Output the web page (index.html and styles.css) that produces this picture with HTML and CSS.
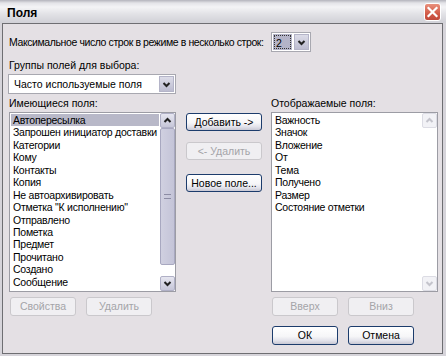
FILE: index.html
```html
<!DOCTYPE html>
<html lang="ru">
<head>
<meta charset="utf-8">
<title>Поля</title>
<link rel="stylesheet" href="styles.css">
</head>
<body>
<div class="window">
  <div class="titlebar">
    <span class="title">Поля</span>
    <span class="close"><svg width="17" height="18" viewBox="0 0 17 18"><path d="M4.5 5 L12.5 13 M12.5 5 L4.5 13" stroke="#fff" stroke-width="2.2" stroke-linecap="square"/></svg></span>
  </div>
  <div class="frame">
    <div class="row-max">
      <span class="max-label">Максимальное число строк в режиме в несколько строк:</span>
      <div class="spin">
        <span class="spin-val"><span class="focus">2</span></span>
        <span class="dropbtn"><svg width="9" height="7" viewBox="0 0 9 7"><path d="M1.5 2 L4.5 5 L7.5 2" fill="none" stroke="#222" stroke-width="2"/></svg></span>
      </div>
    </div>
    <div class="lbl lbl-groups">Группы полей для выбора:</div>
    <div class="combo">
      <span class="combo-text">Часто используемые поля</span>
      <span class="dropbtn"><svg width="9" height="7" viewBox="0 0 9 7"><path d="M1.5 2 L4.5 5 L7.5 2" fill="none" stroke="#222" stroke-width="2"/></svg></span>
    </div>
    <div class="lists">
      <div class="col">
        <div class="lbl">Имеющиеся поля:</div>
        <div class="listbox">
          <ul class="items">
            <li class="sel">Автопересылка</li>
            <li>Запрошен инициатор доставки</li>
            <li>Категории</li>
            <li>Кому</li>
            <li>Контакты</li>
            <li>Копия</li>
            <li>Не автоархивировать</li>
            <li>Отметка "К исполнению"</li>
            <li>Отправлено</li>
            <li>Пометка</li>
            <li>Предмет</li>
            <li>Прочитано</li>
            <li>Создано</li>
            <li>Сообщение</li>
          </ul>
          <div class="scroll">
            <span class="sbtn"><svg width="9" height="7" viewBox="0 0 9 7"><path d="M1.5 5 L4.5 2 L7.5 5" fill="none" stroke="#222" stroke-width="2"/></svg></span>
            <span class="thumb"><span class="grip"></span></span>
            <span class="track"></span>
            <span class="sbtn"><svg width="9" height="7" viewBox="0 0 9 7"><path d="M1.5 2 L4.5 5 L7.5 2" fill="none" stroke="#222" stroke-width="2"/></svg></span>
          </div>
        </div>
        <div class="btnrow">
          <button class="btn" disabled>Свойства</button>
          <button class="btn" disabled>Удалить</button>
        </div>
      </div>
      <div class="col mid">
        <button class="btn wide">Добавить -&gt;</button>
        <button class="btn wide second" disabled>&lt;- Удалить</button>
        <button class="btn wide third">Новое поле...</button>
      </div>
      <div class="col">
        <div class="lbl">Отображаемые поля:</div>
        <div class="listbox">
          <ul class="items">
            <li>Важность</li>
            <li>Значок</li>
            <li>Вложение</li>
            <li>От</li>
            <li>Тема</li>
            <li>Получено</li>
            <li>Размер</li>
            <li>Состояние отметки</li>
          </ul>
          <div class="scroll off">
            <span class="sbtn"><svg width="9" height="7" viewBox="0 0 9 7"><path d="M1.5 5 L4.5 2 L7.5 5" fill="none" stroke="#c4c4cc" stroke-width="2"/></svg></span>
            <span class="track"></span>
            <span class="sbtn"><svg width="9" height="7" viewBox="0 0 9 7"><path d="M1.5 2 L4.5 5 L7.5 2" fill="none" stroke="#c4c4cc" stroke-width="2"/></svg></span>
          </div>
        </div>
        <div class="btnrow">
          <button class="btn" disabled>Вверх</button>
          <button class="btn" disabled>Вниз</button>
        </div>
        <div class="btnrow okrow">
          <button class="btn">ОК</button>
          <button class="btn">Отмена</button>
        </div>
      </div>
    </div>
  </div>
</div>
</body>
</html>
```

FILE: styles.css
```css
* { box-sizing: border-box; margin: 0; padding: 0; }
body {
  margin: 0;
  font-family: "Liberation Sans", Arial, sans-serif;
  font-size: 10.5px;
  color: #000;
  background: #fff;
}
.window {
  width: 446px;
  height: 356px;
  background: #d6d4da;
  display: flex;
  flex-direction: column;
}
.titlebar {
  height: 23px;
  flex: none;
  background: linear-gradient(#b4b4bc 0, #e4e4e8 3px, #f4f4f6 7px, #e2e2e6 14px, #d2d2d8 22px);
  display: flex;
  align-items: center;
  justify-content: space-between;
  padding: 0 5px 0 7px;
}
.title {
  font-weight: bold;
  font-size: 12px;
  color: #000;
  padding-top: 2px;
}
.close {
  width: 17px;
  height: 18px;
  margin-top: 1px;
  border-radius: 3px;
  border: 1px solid #fff;
  background: linear-gradient(#e8907c, #d25a48 60%, #c04a3c);
  display: flex;
}
.close svg { display: block; margin: -1px; }
.frame {
  flex: 1;
  margin: 0 3px 2px 2px;
  border: 1px solid #6e6e72;
  background: #e4e0e4;
  padding: 8px 0 0 6px;
}
.row-max {
  display: flex;
  align-items: center;
  height: 20px;
}
.max-label { width: 262px; white-space: nowrap; letter-spacing: -0.4px; }
.spin {
  width: 40px;
  height: 20px;
  border: 1px solid #a8a8b0;
  background: #fff;
  display: flex;
  padding: 1px;
  gap: 2px;
}
.spin-val {
  width: 20px;
  background: #b4b4c8;
  display: flex;
  padding: 1px;
}
.focus {
  flex: 1;
  border: 1px dotted #333;
  line-height: 14px;
  padding-left: 1px;
}
.dropbtn {
  width: 15px;
  background: linear-gradient(#dcdce8, #bcbcd0);
  border: 1px solid #ffffff;
  outline: 1px solid #b4b4c8;
  outline-offset: -1px;
  display: flex;
  align-items: center;
  justify-content: center;
}
.lbl {
  height: 13px;
  line-height: 13px;
  white-space: nowrap;
}
.lbl-groups { margin-top: 7px; }
.combo {
  margin-top: 2px;
  width: 168px;
  height: 20px;
  margin-left: -1px;
  border: 1px solid #a8a8b0;
  background: #fff;
  display: flex;
  padding: 1px;
}
.combo-text { flex: 1; line-height: 16px; padding-left: 4px; }
.lists {
  margin-top: 3px;
  display: grid;
  grid-template-columns: 167px 76px 166px;
  column-gap: 10px;
}
.lists .col:last-child { margin-left: -1px; }
.listbox {
  margin-top: 2px;
  height: 180px;
  border: 1px solid #9c9ca4;
  background: #fff;
  display: flex;
}
.items {
  list-style: none;
  flex: 1;
  padding: 1px 1px 0 1px;
  overflow: hidden;
}
.items li {
  height: 12.45px;
  line-height: 12.45px;
  padding-left: 2px;
  white-space: nowrap;
  overflow: hidden;
  letter-spacing: -0.25px;
}
.items li.sel { background: #b8b8c8; }
.scroll {
  width: 15px;
  display: flex;
  flex-direction: column;
}
.sbtn {
  height: 15px;
  flex: none;
  background: linear-gradient(#e6e6f0, #c6c6d8);
  border: 1px solid #b0b0c6;
  border-radius: 2px;
  display: flex;
  align-items: center;
  justify-content: center;
}
.thumb {
  height: 137px;
  background: linear-gradient(90deg, #d0d0e0, #c4c4d8);
  border: 1px solid #a8a8c0;
  border-radius: 2px;
  display: flex;
  align-items: center;
  justify-content: center;
}
.grip {
  width: 7px;
  height: 5px;
  border-top: 1px solid #8c8ca4;
  border-bottom: 1px solid #8c8ca4;
}
.track { flex: 1; background: #fff; }
.scroll.off .sbtn {
  background: #f2f2f6;
  border-color: #dcdce4;
}
.btnrow {
  margin-top: 5px;
  margin-left: 1px;
  display: flex;
  gap: 10px;
}
.okrow { margin-top: 10px; }
.btn {
  width: 66px;
  height: 19px;
  font-family: "Liberation Sans", Arial, sans-serif;
  font-size: 10.5px;
  color: #000;
  border: 1px solid #1c3c6c;
  border-radius: 3px;
  background: linear-gradient(#ffffff 0, #f6f6f8 55%, #e2e2ea 80%, #c8c8d4 100%);
  padding: 0;
  line-height: 15px;
}
.btn:disabled {
  color: #a4a4a8;
  border-color: #cac8cc;
  background: #f0eff2;
}
.mid { display: flex; flex-direction: column; padding-top: 16px; }
.btn.wide { width: 76px; height: 18px; }
.btn.second { margin-top: 11px; }
.btn.third { margin-top: 14px; }
```
